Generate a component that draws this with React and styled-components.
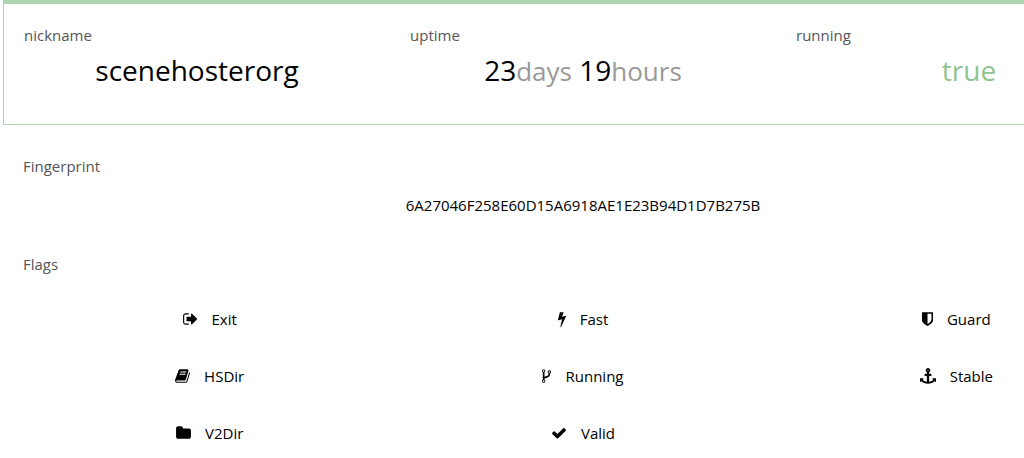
import { createGlobalStyle, styled } from "styled-components";

const GlobalStyle = createGlobalStyle`
  * {
    box-sizing: border-box;
  }

  body {
    margin: 0;
    background: #fff;
    color: #000;
    font-family: "Open Sans", "Noto Sans", sans-serif;
    font-size: 15px;
    line-height: 24px;
  }
`;

const Page = styled.div`
  overflow: hidden;
`;

/* the three columns run past the right edge of the window */
const Container = styled.main`
  margin: 0 -139px 0 3px;
`;

const Summary = styled.dl`
  display: grid;
  grid-template-columns: repeat(3, 1fr);
  margin: 0;
  padding: 19px 0 30px;
  border: 1px solid #aed6ae;
  border-top-width: 4px;
`;

const SummaryItem = styled.div`
  display: flex;
  flex-direction: column;
`;

const Label = styled.dt`
  padding-left: 20px;
  color: #555;
`;

const Value = styled.dd`
  margin: 0;
  font-size: 28px;
  line-height: 46px;
  text-align: center;
  color: ${(props) => props.$color || "#000"};
`;

const Unit = styled.span`
  font-size: 26px;
  color: #999;
`;

const Section = styled.section`
  padding: 0 20px;
  margin-top: ${(props) => props.$top};
`;

const Title = styled.h2`
  margin: 0;
  font-size: 15px;
  font-weight: 400;
  color: #555;
`;

const Fingerprint = styled.p`
  margin: 15px 0 0;
  text-align: center;
`;

const FlagList = styled.ul`
  display: grid;
  grid-template-columns: repeat(3, 1fr);
  row-gap: 33px;
  margin: 31px 0 0;
  padding: 0;
  list-style: none;
`;

const Flag = styled.li`
  display: flex;
  justify-content: center;
  align-items: center;
  gap: 14px;
`;

const flags = [
  {
    name: "Exit",
    width: 15,
    path: "M704 1440q0 4 1 20t.5 26.5-3 23.5-10 19.5-20.5 6.5h-320q-119 0-203.5-84.5t-84.5-203.5v-704q0-119 84.5-203.5t203.5-84.5h320q13 0 22.5 9.5t9.5 22.5q0 4 1 20t.5 26.5-3 23.5-10 19.5-20.5 6.5h-320q-66 0-113 47t-47 113v704q0 66 47 113t113 47h312l11.5 1 11.5 3 8 5.5 7 9 2 13.5zm928-544q0 26-19 45l-544 544q-19 19-45 19t-45-19-19-45v-288h-448q-26 0-45-19t-19-45v-384q0-26 19-45t45-19h448v-288q0-26 19-45t45-19 45 19l544 544q19 19 19 45z",
  },
  {
    name: "Fast",
    width: 8,
    path: "M1333 566q18 20 7 44l-540 1157q-13 25-42 25-4 0-14-2-17-5-25.5-19t-4.5-30l197-808-406 101q-4 1-12 1-18 0-31-11-18-15-13-39l201-825q4-14 16-23t28-9h328q19 0 32 12.5t13 29.5q0 8-5 18l-171 463 396-98q8-2 12-2 19 0 34 15z",
  },
  {
    name: "Guard",
    width: 11,
    path: "M1344 960v-640h-448v1137q119-63 213-137 235-184 235-360zm192-768v768q0 86-33.5 170.5t-83 150-118 127.5-126.5 103-121 77.5-89.5 49.5-42.5 20q-12 6-26 6t-26-6q-16-7-42.5-20t-89.5-49.5-121-77.5-126.5-103-118-127.5-83-150-33.5-170.5v-768q0-26 19-45t45-19h1152q26 0 45 19t19 45z",
  },
  {
    name: "HSDir",
    width: 15,
    path: "M1703 478q40 57 18 129l-275 906q-19 64-76.5 107.5t-122.5 43.5h-923q-77 0-148.5-53.5t-99.5-131.5q-24-67-2-127 0-4 3-27t4-37q1-8-3-21.5t-3-19.5q2-11 8-21t16.5-23.5 16.5-23.5q23-38 45-91.5t30-91.5q3-10 .5-30t-.5-28q3-11 17-28t17-23q21-36 42-92t25-90q1-9-2.5-32t.5-28q4-13 22-30.5t22-22.5q19-26 42.5-84.5t27.5-96.5q1-8-3-25.5t-2-26.5q2-8 9-18t18-23 17-21q8-12 16.5-30.5t15-35 16-36 19.5-32 26.5-23.5 36-11.5 47.5 5.5l-1 3q38-9 51-9h761q74 0 114 56t18 130l-274 906q-36 119-71.5 153.5t-128.5 34.5h-869q-27 0-38 15-11 16-1 43 24 70 144 70h923q29 0 56-15.5t35-41.5l300-987q7-22 5-57 38 15 59 43zm-1064 2q-4 13 2 22.5t20 9.5h608q13 0 25.5-9.5t16.5-22.5l21-64q4-13-2-22.5t-20-9.5h-608q-13 0-25.5 9.5t-16.5 22.5zm-83 256q-4 13 2 22.5t20 9.5h608q13 0 25.5-9.5t16.5-22.5l21-64q4-13-2-22.5t-20-9.5h-608q-13 0-25.5 9.5t-16.5 22.5z",
  },
  {
    name: "Running",
    width: 9,
    path: "M672 1472q0-40-28-68t-68-28-68 28-28 68 28 68 68 28 68-28 28-68zm0-1152q0-40-28-68t-68-28-68 28-28 68 28 68 68 28 68-28 28-68zm640 128q0-40-28-68t-68-28-68 28-28 68 28 68 68 28 68-28 28-68zm96 0q0 52-26 96.5t-70 69.5q-2 287-226 414-67 38-203 81-128 40-169.5 71t-41.5 100v26q44 25 70 69.5t26 96.5q0 80-56 136t-136 56-136-56-56-136q0-52 26-96.5t70-69.5v-820q-44-25-70-69.5t-26-96.5q0-80 56-136t136-56 136 56 56 136q0 52-26 96.5t-70 69.5v497q54-26 154-57 55-17 87.5-29.5t70.5-31 59-39.5 40.5-51 28-69.5 8.5-91.5q-44-25-70-69.5t-26-96.5q0-80 56-136t136-56 136 56 56 136z",
  },
  {
    name: "Stable",
    width: 16,
    path: "M960 256q0-26-19-45t-45-19-45 19-19 45 19 45 45 19 45-19 19-45zm832 928v352q0 22-20 30-8 2-12 2-12 0-23-9l-93-93q-119 143-318.5 226.5t-429.5 83.5-429.5-83.5-318.5-226.5l-93 93q-9 9-23 9-4 0-12-2-20-8-20-30v-352q0-14 9-23t23-9h352q22 0 30 20 8 19-7 35l-100 100q67 91 189.5 153.5t271.5 82.5v-647h-192q-26 0-45-19t-19-45v-128q0-26 19-45t45-19h192v-163q-58-34-93-92.5t-35-128.5q0-106 75-181t181-75 181 75 75 181q0 70-35 128.5t-93 92.5v163h192q26 0 45 19t19 45v128q0 26-19 45t-45 19h-192v647q149-20 271.5-82.5t189.5-153.5l-100-100q-15-16-7-35 8-20 30-20h352q14 0 23 9t9 23z",
  },
  {
    name: "V2Dir",
    width: 15,
    path: "M1728 608v704q0 92-66 158t-158 66h-1216q-92 0-158-66t-66-158v-960q0-92 66-158t158-66h320q92 0 158 66t66 158v32h672q92 0 158 66t66 158z",
  },
  {
    name: "Valid",
    width: 16,
    path: "M1671 566q0 40-28 68l-724 724-136 136q-28 28-68 28t-68-28l-136-136-362-362q-28-28-28-68t28-68l136-136q28-28 68-28t68 28l294 295 656-657q28-28 68-28t68 28l136 136q28 28 28 68z",
  },
];

const ICON_UNITS = 1792;
const ICON_HEIGHT = 16;

const FlagIcon = ({ width, path }) => {
  // glyphs sit in the middle of a square, so trim both sides
  const units = (width * ICON_UNITS) / ICON_HEIGHT;

  return (
    <svg
      width={width}
      height={ICON_HEIGHT}
      viewBox={`${(ICON_UNITS - units) / 2} 0 ${units} ${ICON_UNITS}`}
      fill="currentColor"
      aria-hidden="true"
    >
      <path d={path} />
    </svg>
  );
};

const App = () => {
  return (
    <Page>
      <GlobalStyle />
      <Container>
        <Summary>
          <SummaryItem>
            <Label>nickname</Label>
            <Value>scenehosterorg</Value>
          </SummaryItem>
          <SummaryItem>
            <Label>uptime</Label>
            <Value>
              23<Unit>days</Unit> 19<Unit>hours</Unit>
            </Value>
          </SummaryItem>
          <SummaryItem>
            <Label>running</Label>
            <Value $color="#8fc48f">true</Value>
          </SummaryItem>
        </Summary>
        <Section $top="29px">
          <Title>Fingerprint</Title>
          <Fingerprint>6A27046F258E60D15A6918AE1E23B94D1D7B275B</Fingerprint>
        </Section>
        <Section $top="35px">
          <Title>Flags</Title>
          <FlagList>
            {flags.map((flag) => (
              <Flag key={flag.name}>
                <FlagIcon width={flag.width} path={flag.path} />
                {flag.name}
              </Flag>
            ))}
          </FlagList>
        </Section>
      </Container>
    </Page>
  );
};

export default App;
